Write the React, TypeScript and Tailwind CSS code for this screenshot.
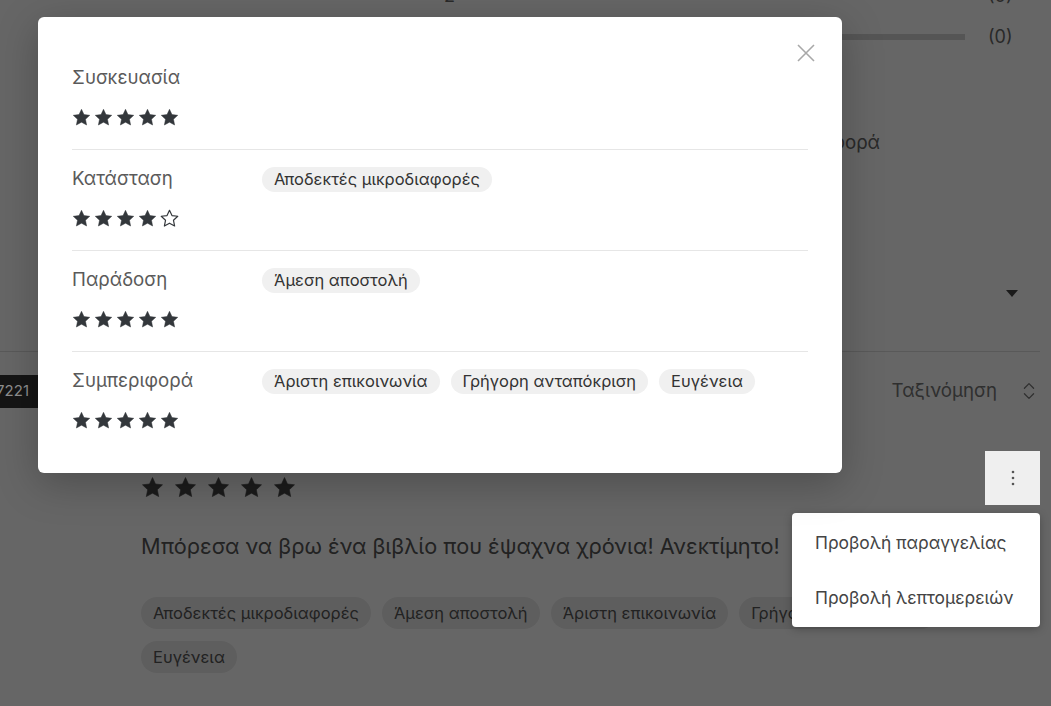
import React from "react";
import { ChevronsUpDown } from "lucide-react";

// Five-point star with a wide inner radius, 24×24 box
const STAR =
  "M12 1.6L15.12 8.31L22.46 9.2L17.04 14.24L18.47 21.5L12 17.9L5.53 21.5L6.96 14.24L1.54 9.2L8.89 8.31Z";

function Star({ filled, className }: { filled: boolean; className: string }) {
  return (
    <svg viewBox="0 0 24 24" className={className} aria-hidden>
      <path
        d={STAR}
        fill={filled ? "currentColor" : "none"}
        stroke="currentColor"
        strokeWidth={filled ? 0.6 : 1.5}
        strokeLinejoin="round"
      />
    </svg>
  );
}

function Stars({ value, size, gap, color }: { value: number; size: string; gap: string; color: string }) {
  return (
    <div className={`flex items-center ${gap} ${color}`}>
      {[1, 2, 3, 4, 5].map((i) => (
        <Star key={i} filled={i <= value} className={size} />
      ))}
    </div>
  );
}

type Category = { label: string; rating: number; tags: string[] };

const categories: Category[] = [
  { label: "Συσκευασία", rating: 5, tags: [] },
  { label: "Κατάσταση", rating: 4, tags: ["Αποδεκτές μικροδιαφορές"] },
  { label: "Παράδοση", rating: 5, tags: ["Άμεση αποστολή"] },
  {
    label: "Συμπεριφορά",
    rating: 5,
    tags: ["Άριστη επικοινωνία", "Γρήγορη ανταπόκριση", "Ευγένεια"],
  },
];

const reviewTags = [
  "Αποδεκτές μικροδιαφορές",
  "Άμεση αποστολή",
  "Άριστη επικοινωνία",
  "Γρήγορη ανταπόκριση",
  "Ευγένεια",
];

function BarRow({ label, count }: { label: string; count: string }) {
  return (
    <div className="flex h-[41px] items-center">
      <span className="w-[26px] text-[18px] text-[#666]">{label}</span>
      <div className="h-[6px] flex-1 bg-[#d4d4d4]" />
      <span className="ml-[23px] w-[40px] text-[18px] text-[#666]">{count}</span>
    </div>
  );
}

export default function App() {
  return (
    <div className="relative h-[706px] w-[1051px] overflow-hidden bg-white font-['Inter','Noto_Sans',sans-serif]">
      {/* page content */}
      <section className="mr-[11px] flex h-[352px] border-b border-[#dedede]">
        <div className="w-[444px] pl-[60px] pt-[11px] text-[18px] text-[#555]">290 Σχόλια</div>
        <div className="flex flex-1 flex-col pr-[12px]">
          <div className="-mt-[25px]">
            <BarRow label="2" count="(0)" />
            <BarRow label="1" count="(0)" />
          </div>
          <div className="mt-[73px] w-[436px] text-right text-[18.7px] leading-[26px] text-[#666]">
            Συμπεριφορά
          </div>
          <div className="mt-[134px] flex justify-end pr-[10px]">
            <svg viewBox="0 0 12 7" className="h-[7px] w-[12px] text-[#444]">
              <path d="M0 0h12L6 7z" fill="currentColor" />
            </svg>
          </div>
        </div>
      </section>

      <div className="mr-[11px] mt-[23px] flex h-[33px] items-center">
        <div className="relative z-30 flex h-[33px] w-[38px] items-center justify-end overflow-hidden bg-[#151515] pr-[9px]">
          <span className="whitespace-nowrap text-[15px] text-[#8e8e8e]">#47221</span>
        </div>
        <div className="ml-auto flex items-center text-[#777]">
          <span className="text-[18.7px]">Ταξινόμηση</span>
          <ChevronsUpDown className="ml-[21px] h-[22px] w-[22px]" strokeWidth={1.4} />
        </div>
      </div>

      <article className="mr-[11px] mt-[43px] flex pl-[141px]">
        <div className="flex-1">
          <div className="pt-[25px]">
            <Stars value={5} size="h-[23px] w-[23px]" gap="gap-[10px]" color="text-[#444]" />
          </div>
          <p className="mt-[33px] text-[21.7px] leading-[28px] text-[#555]">
            Μπόρεσα να βρω ένα βιβλίο που έψαχνα χρόνια! Ανεκτίμητο!
          </p>
          <div className="mt-[37px] flex flex-wrap gap-x-[11px] gap-y-[12px]">
            {reviewTags.map((t) => (
              <span
                key={t}
                className="flex h-[32px] items-center whitespace-nowrap rounded-full bg-[#ebebeb] px-[12px] text-[16.5px] text-[#555]"
              >
                {t}
              </span>
            ))}
          </div>
        </div>
        <div className="relative z-30 self-start">
          <button className="flex h-[54px] w-[55px] items-center justify-center bg-[#efefef]">
            <svg viewBox="0 0 4 16" className="h-[16px] w-[4px] text-[#555]">
              <circle cx="2" cy="2" r="1.3" fill="currentColor" />
              <circle cx="2" cy="8" r="1.3" fill="currentColor" />
              <circle cx="2" cy="14" r="1.3" fill="currentColor" />
            </svg>
          </button>
          <div className="absolute right-0 top-[62px] w-[248px] rounded-[4px] bg-white pb-[1px] pt-[3px] shadow-[0_2px_8px_rgba(0,0,0,0.25)]">
            {["Προβολή παραγγελίας", "Προβολή λεπτομερειών"].map((item) => (
              <div key={item} className="flex h-[55px] items-center pl-[23px] text-[17.4px] text-[#444]">
                {item}
              </div>
            ))}
          </div>
        </div>
      </article>

      {/* dimmed backdrop */}
      <div className="absolute inset-0 z-20 bg-black/60" />

      {/* rating details dialog */}
      <div className="absolute left-[38px] top-[17px] z-30 w-[804px] rounded-[6px] bg-white px-[34px] pb-[21px] pt-[32px] shadow-[0_10px_40px_rgba(0,0,0,0.25)]">
        <button className="absolute right-[27px] top-[27px] p-0 text-[#a8a8a8]">
          <svg viewBox="0 0 18 18" className="h-[18px] w-[18px]">
            <path d="M1 1l16 16M17 1L1 17" stroke="currentColor" strokeWidth="1.6" />
          </svg>
        </button>
        <div className="divide-y divide-[#e6e6e6]">
          {categories.map((c) => (
            <div key={c.label} className="pb-[22px] pt-[16px]">
              <div className="flex h-[26px] items-center">
                <span className="w-[190px] pt-[1px] text-[18.7px] text-[#5a5a5a]">{c.label}</span>
                <div className="flex gap-[11px]">
                  {c.tags.map((t) => (
                    <span
                      key={t}
                      className="flex h-[25px] items-center whitespace-nowrap rounded-full bg-[#f0f0f0] px-[12px] text-[16.5px] text-[#333]"
                    >
                      {t}
                    </span>
                  ))}
                </div>
              </div>
              <div className="mt-[16px] flex h-[20px] items-center">
                <Stars value={c.rating} size="h-[19px] w-[19px]" gap="gap-[3px]" color="text-[#33373b]" />
              </div>
            </div>
          ))}
        </div>
      </div>
    </div>
  );
}
